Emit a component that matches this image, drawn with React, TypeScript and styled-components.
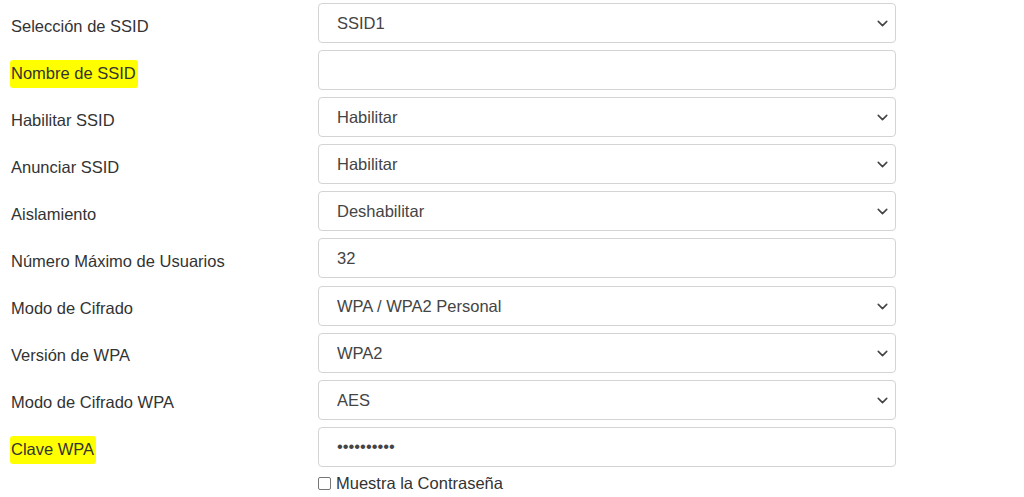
import * as React from "react";
import styled, { createGlobalStyle } from "styled-components";
import { ChevronDown } from "lucide-react";

const GlobalStyle = createGlobalStyle`
    html, body {
        margin: 0;
        padding: 0;
        background: #ffffff;
    }
    body {
        font-family: "Liberation Sans", Arial, sans-serif;
        color: #333333;
    }
`;

const Form = styled.div`
    display: grid;
    grid-template-columns: 308px 578px;
    row-gap: 7.1px;
    padding: 3px 0 0 10px;
    width: 1024px;
    box-sizing: border-box;
`;

const Label = styled.label<{ $marked?: boolean }>`
    display: flex;
    align-items: center;
    padding-top: 7px;
    font-size: 16.5px;
    color: #333333;
    span {
        padding: 4px 2px 5px 1px;
        background: ${props => (props.$marked ? "#ffff00" : "transparent")};
        border-radius: 3px;
    }
`;

const FieldWrap = styled.div`
    position: relative;
    height: 40px;
`;

const fieldBase = `
    width: 100%;
    height: 40px;
    box-sizing: border-box;
    border: 1px solid #d4d4d4;
    border-radius: 4px;
    background: #ffffff;
    padding: 0 40px 0 18px;
    font-family: "Liberation Sans", Arial, sans-serif;
    font-size: 16.5px;
    color: #444444;
    outline: none;
    margin: 0;
`;

const Select = styled.select`
    ${fieldBase}
    appearance: none;
    -webkit-appearance: none;
`;

const Input = styled.input`
    ${fieldBase}
`;

const Chevron = styled(ChevronDown)`
    position: absolute;
    right: 5px;
    top: 12px;
    width: 17px;
    height: 17px;
    color: #444444;
    pointer-events: none;
`;

const CheckRow = styled.label`
    grid-column: 2;
    display: flex;
    align-items: center;
    gap: 5px;
    margin-top: 0;
    font-size: 16.5px;
    color: #333333;
`;

const Check = styled.input`
    appearance: none;
    -webkit-appearance: none;
    width: 13px;
    height: 13px;
    margin: 0;
    border: 1px solid #767676;
    border-radius: 2px;
    background: #ffffff;
    box-sizing: border-box;
`;

type Row = {
    label: string;
    kind: "select" | "text" | "password";
    value: string;
    marked?: boolean;
};

const rows: Row[] = [
    { label: "Selección de SSID", kind: "select", value: "SSID1" },
    { label: "Nombre de SSID", kind: "text", value: "", marked: true },
    { label: "Habilitar SSID", kind: "select", value: "Habilitar" },
    { label: "Anunciar SSID", kind: "select", value: "Habilitar" },
    { label: "Aislamiento", kind: "select", value: "Deshabilitar" },
    { label: "Número Máximo de Usuarios", kind: "text", value: "32" },
    { label: "Modo de Cifrado", kind: "select", value: "WPA / WPA2 Personal" },
    { label: "Versión de WPA", kind: "select", value: "WPA2" },
    { label: "Modo de Cifrado WPA", kind: "select", value: "AES" },
    { label: "Clave WPA", kind: "password", value: "1234567890", marked: true },
];

export default function App() {
    return (
        <>
            <GlobalStyle />
            <Form>
                {rows.map(row => (
                    <React.Fragment key={row.label}>
                        <Label $marked={row.marked}>
                            <span>{row.label}</span>
                        </Label>
                        <FieldWrap>
                            {row.kind === "select" ? (
                                <>
                                    <Select defaultValue={row.value}>
                                        <option>{row.value}</option>
                                    </Select>
                                    <Chevron strokeWidth={2.2} />
                                </>
                            ) : (
                                <Input type={row.kind} defaultValue={row.value} readOnly />
                            )}
                        </FieldWrap>
                    </React.Fragment>
                ))}
                <CheckRow>
                    <Check type="checkbox" />
                    Muestra la Contraseña
                </CheckRow>
            </Form>
        </>
    );
}
